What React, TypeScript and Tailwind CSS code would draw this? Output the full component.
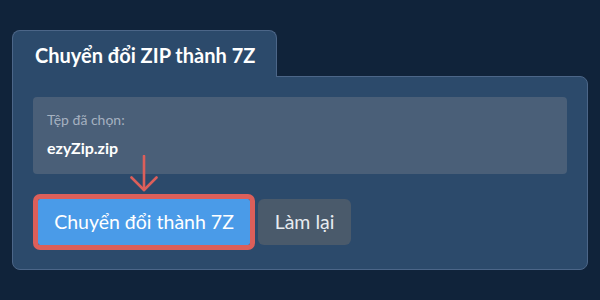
import React from 'react';

function DownArrow() {
  return (
    <svg
      className="absolute left-[92px] top-[-44px] h-[37px] w-[28px]"
      viewBox="0 0 28 37"
      fill="none"
      stroke="#dc5f5a"
      strokeWidth="2.6"
      strokeLinecap="round"
      strokeLinejoin="round"
    >
      <path d="M14 1 V35" />
      <path d="M1.5 22.5 L14 35 L26.5 22.5" />
    </svg>
  );
}

export default function App() {
  return (
    <div className="h-[300px] w-[600px] bg-[#10233a] px-3 pt-[30px] font-['Lato',sans-serif]">
      {/* tab */}
      <div className="relative z-10 -mb-px inline-block rounded-t-lg border border-b-0 border-[#4c6688] bg-[#2c4a6b] pl-[22px] pr-[21px] pt-[10px] pb-[8px]">
        <h1 className="text-[20px] font-bold leading-7 text-white">Chuyển đổi ZIP thành 7Z</h1>
      </div>

      {/* panel */}
      <div className="rounded-b-lg rounded-tr-lg border border-[#4c6688] bg-[#2c4a6b] px-5 pt-5 pb-6">
        <div className="rounded bg-[#4a5f78] px-[14px] pt-[13px] pb-[14px]">
          <div className="text-[14px] leading-5 text-[#a5b1c0]">Tệp đã chọn:</div>
          <div className="mt-[6px] text-[16px] font-bold leading-6 text-white">ezyZip.zip</div>
        </div>

        <div className="mt-[25px] flex items-center gap-2 pl-[5px]">
          <div className="relative">
            <DownArrow />
            <button className="h-[46px] w-[212px] rounded-[2px] bg-[#4a9be8] text-[19.5px] text-white outline outline-[5px] outline-[#dc5f5a]">
              Chuyển đổi thành 7Z
            </button>
          </div>
          <button className="h-[46px] w-[93px] rounded-md bg-[#4a5a6b] text-[19.5px] text-[#e6ebf0]">
            Làm lại
          </button>
        </div>
      </div>
    </div>
  );
}
